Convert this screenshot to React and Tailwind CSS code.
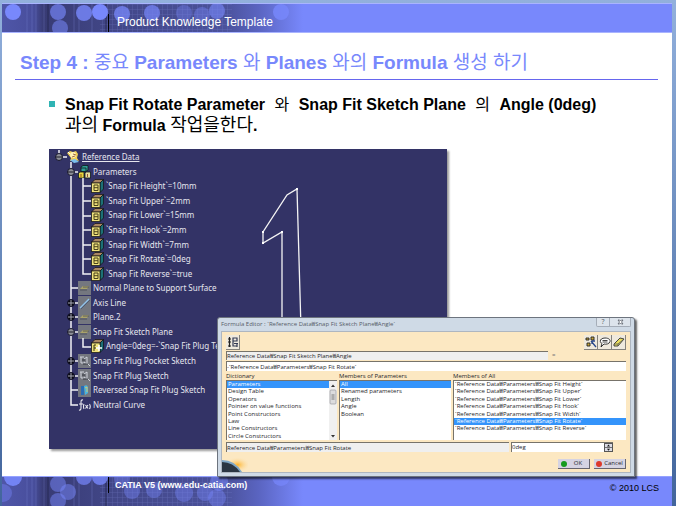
import React from "react";

const TREE = [
  { label: "Reference Data", level: 0, icon: "root" },
  { label: "Parameters", level: 1, icon: "set" },
  { label: "`Snap Fit Height`=10mm", level: 2, icon: "param" },
  { label: "`Snap Fit Upper`=2mm", level: 2, icon: "param" },
  { label: "`Snap Fit Lower`=15mm", level: 2, icon: "param" },
  { label: "`Snap Fit Hook`=2mm", level: 2, icon: "param" },
  { label: "`Snap Fit Width`=7mm", level: 2, icon: "param" },
  { label: "`Snap Fit Rotate`=0deg", level: 2, icon: "param" },
  { label: "`Snap Fit Reverse`=true", level: 2, icon: "param" },
  { label: "Normal Plane to Support Surface", level: 1, icon: "plane" },
  { label: "Axis Line", level: 1, icon: "line" },
  { label: "Plane.2", level: 1, icon: "plane" },
  { label: "Snap Fit Sketch Plane", level: 1, icon: "plane" },
  { label: "Angle=0deg=-`Snap Fit Plug Template", level: 2, icon: "formula" },
  { label: "Snap Fit Plug Pocket Sketch", level: 1, icon: "sketch" },
  { label: "Snap Fit Plug Sketch", level: 1, icon: "sketch" },
  { label: "Reversed Snap Fit Plug Sketch", level: 1, icon: "reversed" },
  { label: "Neutral Curve", level: 1, icon: "fx" },
];

const INDENT = ["pl-[18px]", "pl-[29px]", "pl-[42px]"];

const DICTIONARY = [
  "Parameters",
  "Design Table",
  "Operators",
  "Pointer on value functions",
  "Point Constructors",
  "Law",
  "Line Constructors",
  "Circle Constructors",
];
const MEMBERS = ["All", "Renamed parameters", "Length", "Angle", "Boolean"];
const ALL = ["Height", "Upper", "Lower", "Hook", "Width", "Rotate", "Reverse"].map(
  (n) => "`Reference Data₩Parameters₩Snap Fit " + n + "`"
);

function TreeIcon({ kind }) {
  const gray = <rect x="0" y="0" width="13" height="14" fill="#74777f" />;
  return (
    <svg viewBox="0 0 13 14" className="h-[14px] w-[13px] shrink-0" aria-hidden="true">
      {kind === "root" && (
        <g>
          <path d="M0 3 L3 1 L6 2 L9 1 L11 4 L10 8 L12 11 L8 10 L3 11 L4 8 Z" fill="#efcf55" />
          <circle cx="6" cy="5" r="3" fill="#fff2b8" />
          <path d="M6 4 L9 5 M5 7 L8 6" stroke="#8a4a20" strokeWidth="0.800" />
          <path d="M3 10 L8 9 L12 12 L7 13 Z" fill="#7cc0ee" />
          <path d="M1 2 L3 4" stroke="#fff" />
        </g>
      )}
      {kind === "set" && (
        <g stroke="#0c1a1a" strokeWidth="0.8">
          <path d="M3 2 L5 0.500 L10 0.500 L10 5 L8 6.500 L3 6.500 Z" fill="#2f9c94" />
          <path d="M0.500 8 L2 7 L6 7 L6 13 L0.500 13 Z" fill="#e8d640" />
          <path d="M7 8 L8 7 L12.500 7 L12.500 13 L7 13 Z" fill="#e9dfa0" />
          <path d="M3 9 v3 M9.500 9 v3" stroke="#7a2f10" />
          <path d="M3 3 h5 v3" fill="none" />
        </g>
      )}
      {(kind === "param" || kind === "formula") && (
        <g>
          <path d="M0.500 4 L4 0.500 L12.500 0.500 L9 4 Z" fill="#a98662" stroke="#111" strokeWidth="0.7" />
          <path d="M9 4 L12.500 0.500 L12.500 10 L9 13.500 Z" fill="#1d7076" stroke="#111" strokeWidth="0.7" />
          <rect x="0.500" y="4" width="8.500" height="9.500" fill="#efe27c" stroke="#111" strokeWidth="0.7" />
          {kind === "param" ? (
            <path d="M3 6 h4 v5.500 h-4 z M3 8.700 h4" fill="none" stroke="#4a431c" strokeWidth="1" />
          ) : (
            <g>
              <path d="M3 6 h2 M3 6 v6 M3 9 h2" stroke="#3a3412" strokeWidth="1" />
              <path d="M8 6 v6 M5 9 h6" stroke="#fff" strokeWidth="1.600" />
            </g>
          )}
        </g>
      )}
      {kind === "plane" && (
        <g>
          {gray}
          <path d="M2 8 L5 5 L11 5 L9 8 Z" fill="#aaa36a" />
          <path d="M2 9 H9 M5 6 H11" stroke="#4a4d55" strokeWidth="0.800" />
        </g>
      )}
      {kind === "line" && (
        <g>
          {gray}
          <path d="M2 12 L11 3" stroke="#8fc4ee" strokeWidth="1.300" />
          <path d="M3 13 L12 4" stroke="#3d4f70" strokeWidth="0.700" />
        </g>
      )}
      {kind === "sketch" && (
        <g>
          {gray}
          <path d="M2 3 h4 M3 3 v6 h4 M6 5 l3 -2 v7 l-3 -2 M9 9 l3 3" fill="none" stroke="#d0d4dc" strokeWidth="1" />
          <path d="M5 10 h5 M4 6 h3" stroke="#33363f" strokeWidth="1" />
        </g>
      )}
      {kind === "reversed" && (
        <g>
          {gray}
          <path d="M3 3 h3 v9 h-3 z" fill="#2a6db5" />
          <path d="M6 3 Q9 1 10 4 V10 L7 12 Z" fill="#49b4e0" />
          <path d="M7 5 L9 4 V9" fill="none" stroke="#d5c66a" />
        </g>
      )}
      {kind === "fx" && (
        <g fill="none" stroke="#e8e8ee" strokeWidth="1.100">
          <path d="M5 2 Q3 1.500 3 4 V10 Q3 12.500 1 12 M1 6 H5" />
          <path d="M6 6 Q5 8.500 6 11 M7.500 7 L10 10.500 M10 7 L7.500 10.500 M11.500 6 Q13 8.500 11.500 11" />
        </g>
      )}
    </svg>
  );
}

function Expander({ x, y, plus }) {
  return (
    <g>
      <circle cx={x} cy={y} r="3.500" fill={plus ? "#05050f" : "#8e9098"} stroke="#15152c" strokeWidth="1" />
      <path d={`M${x - 3} ${y} h6`} stroke={plus ? "#a9abb8" : "#1b1b28"} strokeWidth="1" />
      {plus && <path d={`M${x} ${y - 3} v6`} stroke="#a9abb8" strokeWidth="1" />}
    </g>
  );
}

function TreeLines() {
  const rowY = (i) => Math.round(7.3 + i * 14.56);
  return (
    <svg viewBox="0 0 60 262" className="absolute top-0 left-0 h-[262px] w-[60px]" aria-hidden="true">
      <g stroke="#f2f2f6" strokeWidth="1.500" fill="none">
        <path d={`M10 0 V${rowY(0)} H18`} />
        <path d={`M22 12 V${rowY(17)} H29`} />
        <path d={`M34 28 V${rowY(8)} H42`} />
        <path d={`M34 188 V${rowY(13)} H42`} />
        {[1, 9, 10, 11, 12, 14, 15, 16].map((i) => (
          <path key={i} d={`M22 ${rowY(i)} H29`} />
        ))}
        {[2, 3, 4, 5, 6, 7].map((i) => (
          <path key={i} d={`M34 ${rowY(i)} H42`} />
        ))}
      </g>
      <Expander x={10} y={rowY(0)} />
      <Expander x={22} y={rowY(1)} />
      <Expander x={22} y={rowY(12)} />
      {[10, 11, 14, 15].map((i) => (
        <Expander key={i} x={22} y={rowY(i)} plus />
      ))}
    </svg>
  );
}

const TOP_DOTS = [
  [11, 8, 8, 1], [56, 8, 8, 0.65], [58, 24, 8, 0.55], [82, 9, 8, 0.8], [98, 8, 8, 1],
  [120, 10, 8, 0.75], [150, 9, 8, 0.7], [182, 9, 8, 0.35], [200, 11, 8, 0.4], [215, 7, 8, 0.6], [279, 8, 8, 0.8],
];
const BOTTOM_DOTS = [
  [11, 0, 9, 0.9], [1, 16, 9, 0.4], [56, 7, 8, 0.5], [66, 15, 8, 0.5], [56, 24, 8, 0.5], [82, 0, 8, 0.7],
  [98, 0, 8, 0.8], [120, 2, 8, 0.4], [130, 14, 8, 0.4], [152, 13, 8, 0.4], [182, 16, 9, 0.4], [203, 16, 8, 0.4],
  [217, 5, 9, 0.5], [215, 21, 9, 0.4], [279, 0, 9, 0.7],
];

function Pattern({ id, dots }) {
  return (
    <svg viewBox="0 0 320 30" preserveAspectRatio="none" className="absolute top-0 left-0 h-[30px] w-[320px]" aria-hidden="true">
      <defs>
        <linearGradient id={`${id}-fade`} x1="0" x2="1">
          <stop offset="0" stopColor="#4f56a8" />
          <stop offset="0.100" stopColor="#484e9c" />
          <stop offset="0.130" stopColor="#383b74" />
          <stop offset="0.350" stopColor="#424788" />
          <stop offset="0.700" stopColor="#4b529c" />
          <stop offset="0.800" stopColor="#5a64c0" />
          <stop offset="0.940" stopColor="#7888fc" />
        </linearGradient>
        <pattern id={`${id}-grid`} width="5" height="5" patternUnits="userSpaceOnUse">
          <path d="M0 0 H5 M0 0 V5" stroke="#8f98e6" strokeWidth="0.800" />
        </pattern>
      </defs>
      <rect width="320" height="30" fill={`url(#${id}-fade)`} />
      <rect x="98" width="132" height="30" fill={`url(#${id}-grid)`} opacity="0.350" />
      <g stroke="#7f89d8" strokeWidth="1" opacity="0.300">
        <path d="M25 0 V30 M30 0 V30 M34 0 V30 M42 0 V30 M72 0 V30 M77 0 V30 M90 0 V30" />
      </g>
      <path d="M46 0 V30 M104 0 V30" stroke="#24264e" strokeWidth="2" opacity="0.400" />
      {dots.map(([x, y, r, o]) => (
        <circle key={`${x}-${y}`} cx={x} cy={y} r={r} fill="#7888fc" opacity={o} />
      ))}
    </svg>
  );
}

function ListBox({ label, items, selected, scroll, className }) {
  return (
    <div className={className}>
      <div className="h-[8px] leading-[8px]">{label}</div>
      <div className="flex h-[60px] border-t border-l border-[#77736a] bg-white">
        <ul role="listbox" aria-label={label} className="grid min-w-0 flex-1 grid-rows-8 overflow-hidden">
          {items.map((item) => (
            <li
              key={item}
              role="option"
              aria-selected={item === selected}
              className={
                item === selected
                  ? "truncate bg-[#3494fb] pl-px leading-[7px] text-white"
                  : "truncate pl-px leading-[7px]"
              }
            >
              {item}
            </li>
          ))}
        </ul>
        {scroll && (
          <svg viewBox="0 0 8 59" className="h-[59px] w-[8px] bg-[#f0f0f0]" aria-hidden="true">
            <path d="M2 6 L4 3.500 L6 6 Z M2 54 L4 56.500 L6 54 Z" fill="#333" />
            <rect x="1" y="9" width="6" height="14" rx="1" fill="#dcdcde" stroke="#9b9ba0" strokeWidth="0.700" />
            <path d="M2.500 14 H5.500 M2.500 16 H5.500 M2.500 18 H5.500" stroke="#555" strokeWidth="0.700" />
          </svg>
        )}
      </div>
    </div>
  );
}

function ToolButton({ label, children }) {
  return (
    <button
      aria-label={label}
      className="flex h-[15px] w-[14px] items-center justify-center border-r border-b border-[#85827c] bg-[#efe9dd]"
    >
      <svg viewBox="0 0 12 12" className="h-[12px] w-[12px]" fill="none">
        {children}
      </svg>
    </button>
  );
}

function FormulaEditor() {
  return (
    <section
      aria-label="Formula Editor"
      className="absolute top-[168px] left-[168px] flex h-[160px] w-[418px] flex-col rounded-t-[3px] border border-[#6d747e] bg-[#cfdae6] px-[3px] pb-[3px] font-['Open_Sans','Noto_Sans_CJK_KR',sans-serif] text-[6px] text-[#26262a] shadow-[2px_2px_2px_rgba(0,0,0,0.6)]"
    >
      <header className="flex h-[13px] shrink-0 items-start justify-between">
        <h2 className="leading-[12px] text-[#565d68]">Formula Editor : `Reference Data₩Snap Fit Sketch Plane₩Angle`</h2>
        <div className="flex h-[9px] rounded-b-[2px] border border-t-0 border-[#a5adb8] bg-[#dde4ec] text-[#555b66]">
          <button aria-label="Help" className="w-[13px] border-r border-[#a5adb8] text-[7px] leading-[8px]">?</button>
          <button aria-label="Close" className="flex w-[20px] items-center justify-center">
            <svg viewBox="0 0 7 6" className="h-[6px] w-[7px]" fill="#fff" stroke="#555b66" strokeWidth="0.800">
              <path d="M1 1 H2.500 L3.500 2 L4.500 1 H6 L4.500 3 L6 5 H4.500 L3.500 4 L2.500 5 H1 L2.500 3 Z" />
            </svg>
          </button>
        </div>
      </header>
      <div className="flex min-h-0 flex-1 flex-col border border-[#aeb6c0] bg-[#fce8c2] px-[4px] pt-[3px]">
        <div className="flex justify-between">
          <ToolButton label="Incremental">
            <path d="M2.500 1 v10 M1 3 h3 M1 6 h3 M1 10 h3" stroke="#222" strokeWidth="1.200" />
            <path d="M6 2 h4 v3 h-4 z M6 5 v5 h4 M7 7.500 h4 M10 7 v4" stroke="#333a55" strokeWidth="1.200" />
          </ToolButton>
          <div className="flex">
            <ToolButton label="Select">
              <path d="M1 2 h3 v2 h-3 z M6 1 h3 v3 h-3 z M2 7 h3 v3 h-3 z" fill="#c9a73a" stroke="#222" strokeWidth="0.900" />
              <path d="M6 5 L11 11 M7 5 h3 M7 5 v3" stroke="#27468a" strokeWidth="1.300" />
            </ToolButton>
            <ToolButton label="Comment">
              <path d="M6 2 C10 2 11.500 4 11 5.500 C10.500 8 7 8.500 5 8 L2 11 L3 7.500 C0 6 1 2 6 2 Z" fill="#fff" stroke="#222" strokeWidth="0.900" />
              <path d="M3.500 4.500 h5 M3.500 6 h5" stroke="#333" strokeWidth="0.900" />
            </ToolButton>
            <ToolButton label="Erase">
              <path d="M1 8 L7 2 L11 3 L5 10 L1 10 Z" fill="#e9dc5a" stroke="#333" strokeWidth="0.900" />
              <path d="M1 8 L5 8 L11 3 M5 8 V10" stroke="#555" strokeWidth="0.800" />
            </ToolButton>
          </div>
        </div>
        <div className="mt-px flex h-[9px] items-center">
          <input
            aria-label="Parameter"
            readOnly
            value="Reference Data₩Snap Fit Sketch Plane₩Angle"
            className="h-[9px] w-[322px] border-t border-l border-[#77736a] bg-[#efefef]"
          />
          <span className="pl-[4px] text-[#777]">=</span>
        </div>
        <input
          aria-label="Formula"
          defaultValue="-`Reference Data₩Parameters₩Snap Fit Rotate`"
          className="mt-px h-[10px] w-full shrink-0 border-t border-l border-[#77736a] bg-white"
        />
        <div className="mt-px flex justify-between gap-[2px]">
          <ListBox label="Dictionary" items={DICTIONARY} selected="Parameters" scroll className="w-[111px]" />
          <ListBox label="Members of Parameters" items={MEMBERS} selected="All" className="w-[112px]" />
          <ListBox label="Members of All" items={ALL} selected={ALL[5]} className="flex-1" />
        </div>
        <div className="mt-[2px] flex h-[10px] gap-[2px]">
          <input
            aria-label="Selected member"
            readOnly
            value="Reference Data₩Parameters₩Snap Fit Rotate"
            className="h-[10px] w-[283px] border-t border-l border-[#77736a] bg-[#efefef]"
          />
          <div className="flex w-[102px] border-t border-l border-[#77736a] bg-white">
            <input aria-label="Value" defaultValue="0deg" className="min-w-0 flex-1" />
            <svg viewBox="0 0 9 9" className="h-[9px] w-[9px]" aria-hidden="true">
              <rect x="0.500" y="0.500" width="8" height="8" fill="#dcdce4" stroke="#555" />
              <path d="M0 4.500 H9" stroke="#555" strokeWidth="0.800" />
              <path d="M3 3.500 L4.500 1.500 L6 3.500 Z M3 5.700 L4.500 7.700 L6 5.700 Z" fill="#111" />
            </svg>
          </div>
        </div>
        <div className="mt-[7px] flex justify-end gap-[4px]">
          <button className="flex h-[10px] w-[32px] items-center border-r border-b border-[#66646e] bg-[#d5d3e2] pl-[3px] leading-[9px]">
            <span className="h-[6px] w-[6px] rounded-full bg-[#169b1e]" />
            <span className="flex-1 text-center">OK</span>
          </button>
          <button className="flex h-[10px] w-[32px] items-center border-r border-b border-[#66646e] bg-[#d5d3e2] pl-[2px] leading-[9px]">
            <span className="h-[6px] w-[6px] shrink-0 rounded-full bg-[#dc3a2c]" />
            <span className="flex-1 text-center">Cancel</span>
          </button>
        </div>
      </div>
      <svg viewBox="0 0 26 16" className="absolute bottom-[4px] left-[4px] h-[16px] w-[26px]" aria-hidden="true">
        <defs>
          <radialGradient id="sun" cx="0.600" cy="0.550" r="0.500">
            <stop offset="0" stopColor="#ffb429" />
            <stop offset="1" stopColor="#fce8c2" stopOpacity="0" />
          </radialGradient>
        </defs>
        <rect width="26" height="16" fill="url(#sun)" />
        <path d="M0 4 Q13 4 20 16 H0 Z" fill="#7fa6c4" />
        <path d="M0 6 Q11 6 18 16 H0 Z" fill="#2b3642" />
      </svg>
    </section>
  );
}

function Viewport() {
  return (
    <div className="relative mt-[13px] ml-[47px] h-[300px] w-[398px]">
      <div className="relative h-full overflow-hidden bg-[#333366] pt-px shadow-[2px_2px_2px_rgba(0,0,0,0.4)]">
        <div className="relative">
          <TreeLines />
          <ul className="grid h-[262px] grid-rows-[repeat(18,minmax(0,1fr))] font-['Noto_Sans',sans-serif] text-[8px] text-[#e6e6ee]">
            {TREE.map((n) => (
              <li key={n.label} className={`flex items-center gap-[2px] whitespace-nowrap ${INDENT[n.level]}`}>
                <TreeIcon kind={n.icon} />
                <span className={n.level === 0 ? "leading-[10px] underline" : "leading-[10px]"}>{n.label}</span>
              </li>
            ))}
          </ul>
        </div>
        <svg viewBox="0 0 398 300" className="absolute inset-0 h-full w-full" fill="none" aria-hidden="true">
          <path d="M233 180 V83 L214 94 V83 L238 46 L248 40 L252 180" stroke="#f4f4f4" strokeWidth="1.300" />
          <path d="M247 39 h2 v2 h-2 z M213 82 h2 v2 h-2 z M213 93 h2 v2 h-2 z M232 82 h2 v2 h-2 z" fill="#fff" />
        </svg>
      </div>
      <FormulaEditor />
    </div>
  );
}

function Ko({ children, className = "" }) {
  return <span lang="ko" className={`font-normal ${className}`}>{children}</span>;
}

export default function App() {
  return (
    <div className="flex min-h-screen flex-col bg-linear-to-b from-[#92b0dc] to-[#42659c] pt-[3px] pr-[4px] pl-[2px] font-['Liberation_Sans','Noto_Sans_CJK_KR',sans-serif]">
      <header className="relative h-[30px] overflow-hidden border-y border-[#a9b4ff] bg-[#7888fc]">
        <Pattern id="top" dots={TOP_DOTS} />
        <div className="relative ml-[106px] flex h-full items-end">
          <span className="h-[18px] w-px bg-black" />
          <p className="pl-[8px] text-[12px] leading-[19px] text-white">Product Knowledge Template</p>
        </div>
      </header>
      <main className="relative z-10 flex-1 bg-white pt-[16px]">
        <h1 className="mr-[14px] ml-[13px] border-b border-[#6666ee] pb-[2px] pl-[5px] text-[19px] leading-[28px] font-bold whitespace-nowrap text-[#7888fc]">
          Step 4 : <Ko>중요</Ko> Parameters <Ko>와</Ko> Planes <Ko>와의</Ko> Formula <Ko>생성 하기</Ko>
        </h1>
        <ul className="mt-[14px] ml-[47px]">
          <li className="flex text-[16px] leading-[21px] font-bold text-black">
            <span className="mt-[7px] mr-[10px] h-[6px] w-[6px] shrink-0 bg-[#30b4b4]" />
            <p>
              Snap Fit Rotate Parameter <Ko className="mx-[5px]">와</Ko> Snap Fit Sketch Plane{" "}
              <Ko className="mx-[5px]">의</Ko> Angle (0deg)
              <br />
              <Ko className="text-[18px]">과의</Ko> Formula <Ko className="text-[18px]">작업을한다</Ko>.
            </p>
          </li>
        </ul>
        <Viewport />
      </main>
      <footer className="relative h-[30px] overflow-hidden border-t border-[#95a2ff] bg-[#7888fc]">
        <Pattern id="bottom" dots={BOTTOM_DOTS} />
        <div className="relative ml-[106px] flex items-start">
          <span className="h-[16px] w-px bg-black" />
          <p className="flex-1 pl-[6px] text-[9px] leading-[16px] font-bold text-white">CATIA V5 (www.edu-catia.com)</p>
          <p className="mt-[3px] mr-[13px] text-[9px] leading-[16px] text-black">© 2010 LCS</p>
        </div>
      </footer>
    </div>
  );
}
